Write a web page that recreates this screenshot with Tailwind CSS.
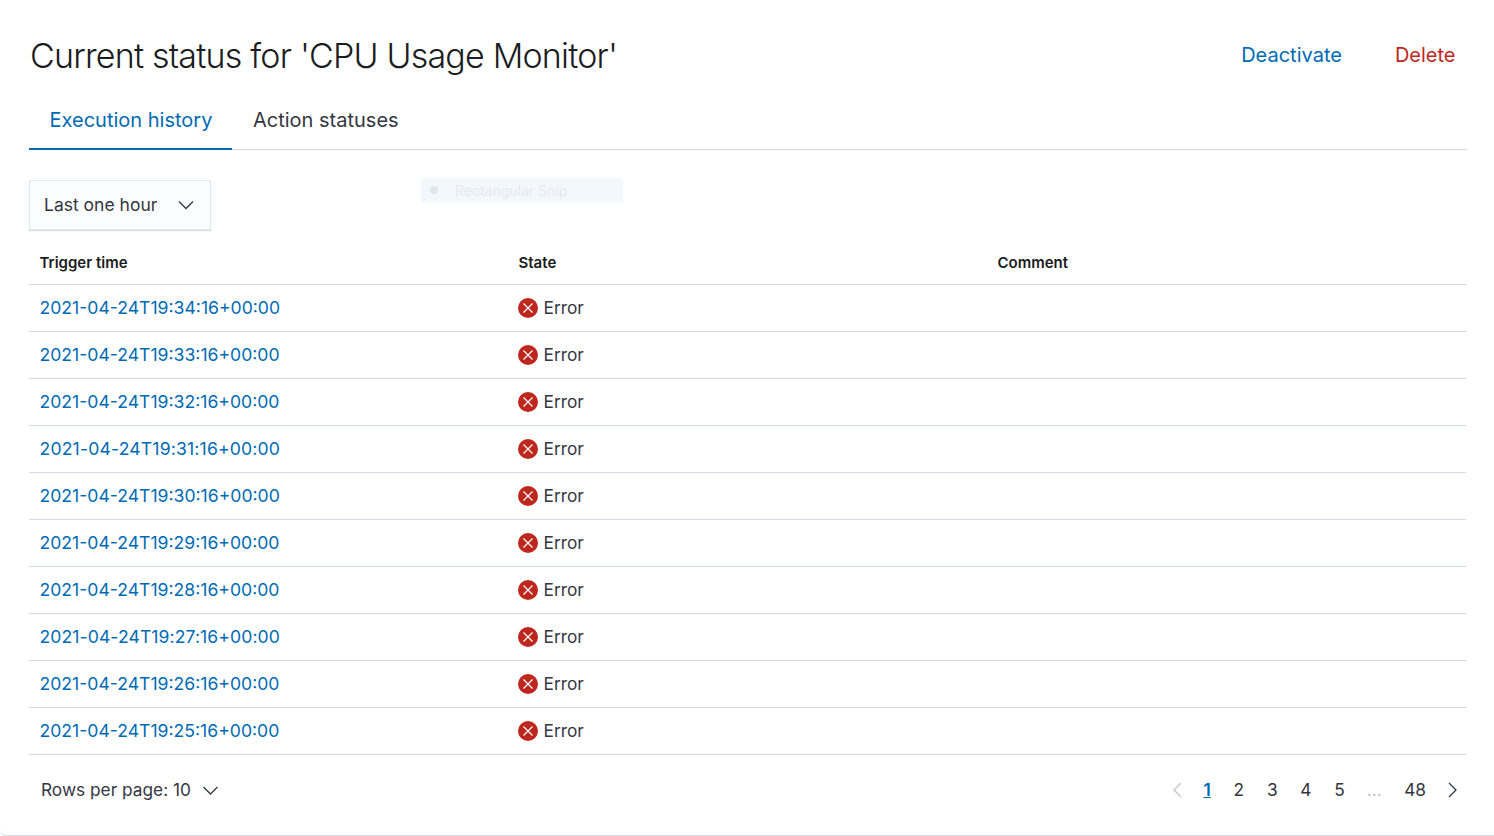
<!DOCTYPE html>
<html lang="en">
<head>
    <meta charset="UTF-8">
    <title>Current status</title>
    <script src="https://cdn.jsdelivr.net/npm/@tailwindcss/browser@4"></script>
</head>
<body class="bg-white font-['Inter',sans-serif] text-[#343741]">
<div class="relative w-[1494px] h-[836px] overflow-hidden border-b border-[#d3dae6] rounded-bl-md">

    <!-- header -->
    <header class="flex items-center justify-between h-[111px] pl-[30px] pr-[38.5px]">
        <h1 class="text-[34px] leading-[40px] font-light tracking-[-0.8px] text-[#1a1c21]">Current status for 'CPU Usage Monitor'</h1>
        <div class="flex items-center gap-[53px] pb-[2px] text-[20px] leading-[24px]">
            <a class="text-[#006bb4]">Deactivate</a>
            <a class="text-[#bd271e]">Delete</a>
        </div>
    </header>

    <!-- tabs -->
    <nav class="flex mx-[29px] w-[1438px] h-[39px] border-b border-[#d3dae6] text-[20px] leading-[18px]">
        <a class="w-[203px] h-[39px] pl-[20.5px] border-b-2 border-[#006bb4] text-[#006bb4]">Execution history</a>
        <a class="pl-[21px]">Action statuses</a>
    </nav>

    <!-- range select -->
    <div class="mt-[30px] ml-[29px] flex items-center justify-between w-[182px] h-[50px] pl-[14px] pr-[16px] bg-[#fbfcfd] border border-[#e4e7f1] shadow-[0_1px_1px_rgba(152,162,179,0.35)] text-[17.5px]">
        <span>Last one hour</span>
        <svg class="w-[16px] h-[10px]" viewBox="0 0 16 10" fill="none" stroke="#343741" stroke-width="1.3"><path d="M1 1.5l7 7 7-7"/></svg>
    </div>

    <!-- stray snip overlay -->
    <div class="absolute left-[421px] top-[178px] w-[202px] h-[24px] flex items-center bg-[#f3f8fc] text-[14px] text-[#e6e9ed]">
        <span class="ml-[9px] w-[8px] h-[8px] rounded-full bg-[#dfe5ec]"></span>
        <span class="ml-[17px]">Rectangular Snip</span>
    </div>

    <!-- table -->
    <div class="mt-[10px] mx-[29px] w-[1437px]">
        <div class="grid grid-cols-[479px_479px_1fr] items-center h-[45px] pl-[10.5px] pt-[2px] border-b border-[#d3dae6] text-[15px] font-semibold text-[#1a1c21]">
            <span>Trigger time</span><span>State</span><span>Comment</span>
        </div>

        <div class="grid grid-cols-[479px_479px_1fr] items-center h-[47px] pl-[11px] border-b border-[#d3dae6] text-[17.3px]">
            <a class="text-[17.6px] text-[#006bb4] -ml-[0.5px]">2021-04-24T19:34:16+00:00</a>
            <span class="flex items-center gap-[5.5px] -ml-[1px]"><svg class="w-[20px] h-[20px]" viewBox="0 0 20 20"><circle cx="10" cy="10" r="10" fill="#bd271e"/><path d="M5.5 5.5l9 9m0-9l-9 9" stroke="#fff" stroke-width="1.2"/></svg>Error</span>
            <span></span>
        </div>
        <div class="grid grid-cols-[479px_479px_1fr] items-center h-[47px] pl-[11px] border-b border-[#d3dae6] text-[17.3px]">
            <a class="text-[17.6px] text-[#006bb4] -ml-[0.5px]">2021-04-24T19:33:16+00:00</a>
            <span class="flex items-center gap-[5.5px] -ml-[1px]"><svg class="w-[20px] h-[20px]" viewBox="0 0 20 20"><circle cx="10" cy="10" r="10" fill="#bd271e"/><path d="M5.5 5.5l9 9m0-9l-9 9" stroke="#fff" stroke-width="1.2"/></svg>Error</span>
            <span></span>
        </div>
        <div class="grid grid-cols-[479px_479px_1fr] items-center h-[47px] pl-[11px] border-b border-[#d3dae6] text-[17.3px]">
            <a class="text-[17.6px] text-[#006bb4] -ml-[0.5px]">2021-04-24T19:32:16+00:00</a>
            <span class="flex items-center gap-[5.5px] -ml-[1px]"><svg class="w-[20px] h-[20px]" viewBox="0 0 20 20"><circle cx="10" cy="10" r="10" fill="#bd271e"/><path d="M5.5 5.5l9 9m0-9l-9 9" stroke="#fff" stroke-width="1.2"/></svg>Error</span>
            <span></span>
        </div>
        <div class="grid grid-cols-[479px_479px_1fr] items-center h-[47px] pl-[11px] border-b border-[#d3dae6] text-[17.3px]">
            <a class="text-[17.6px] tracking-[0.17px] text-[#006bb4] -ml-[0.5px]">2021-04-24T19:31:16+00:00</a>
            <span class="flex items-center gap-[5.5px] -ml-[1px]"><svg class="w-[20px] h-[20px]" viewBox="0 0 20 20"><circle cx="10" cy="10" r="10" fill="#bd271e"/><path d="M5.5 5.5l9 9m0-9l-9 9" stroke="#fff" stroke-width="1.2"/></svg>Error</span>
            <span></span>
        </div>
        <div class="grid grid-cols-[479px_479px_1fr] items-center h-[47px] pl-[11px] border-b border-[#d3dae6] text-[17.3px]">
            <a class="text-[17.6px] text-[#006bb4] -ml-[0.5px]">2021-04-24T19:30:16+00:00</a>
            <span class="flex items-center gap-[5.5px] -ml-[1px]"><svg class="w-[20px] h-[20px]" viewBox="0 0 20 20"><circle cx="10" cy="10" r="10" fill="#bd271e"/><path d="M5.5 5.5l9 9m0-9l-9 9" stroke="#fff" stroke-width="1.2"/></svg>Error</span>
            <span></span>
        </div>
        <div class="grid grid-cols-[479px_479px_1fr] items-center h-[47px] pl-[11px] border-b border-[#d3dae6] text-[17.3px]">
            <a class="text-[17.6px] text-[#006bb4] -ml-[0.5px]">2021-04-24T19:29:16+00:00</a>
            <span class="flex items-center gap-[5.5px] -ml-[1px]"><svg class="w-[20px] h-[20px]" viewBox="0 0 20 20"><circle cx="10" cy="10" r="10" fill="#bd271e"/><path d="M5.5 5.5l9 9m0-9l-9 9" stroke="#fff" stroke-width="1.2"/></svg>Error</span>
            <span></span>
        </div>
        <div class="grid grid-cols-[479px_479px_1fr] items-center h-[47px] pl-[11px] border-b border-[#d3dae6] text-[17.3px]">
            <a class="text-[17.6px] text-[#006bb4] -ml-[0.5px]">2021-04-24T19:28:16+00:00</a>
            <span class="flex items-center gap-[5.5px] -ml-[1px]"><svg class="w-[20px] h-[20px]" viewBox="0 0 20 20"><circle cx="10" cy="10" r="10" fill="#bd271e"/><path d="M5.5 5.5l9 9m0-9l-9 9" stroke="#fff" stroke-width="1.2"/></svg>Error</span>
            <span></span>
        </div>
        <div class="grid grid-cols-[479px_479px_1fr] items-center h-[47px] pl-[11px] border-b border-[#d3dae6] text-[17.3px]">
            <a class="text-[17.6px] tracking-[0.08px] text-[#006bb4] -ml-[0.5px]">2021-04-24T19:27:16+00:00</a>
            <span class="flex items-center gap-[5.5px] -ml-[1px]"><svg class="w-[20px] h-[20px]" viewBox="0 0 20 20"><circle cx="10" cy="10" r="10" fill="#bd271e"/><path d="M5.5 5.5l9 9m0-9l-9 9" stroke="#fff" stroke-width="1.2"/></svg>Error</span>
            <span></span>
        </div>
        <div class="grid grid-cols-[479px_479px_1fr] items-center h-[47px] pl-[11px] border-b border-[#d3dae6] text-[17.3px]">
            <a class="text-[17.6px] text-[#006bb4] -ml-[0.5px]">2021-04-24T19:26:16+00:00</a>
            <span class="flex items-center gap-[5.5px] -ml-[1px]"><svg class="w-[20px] h-[20px]" viewBox="0 0 20 20"><circle cx="10" cy="10" r="10" fill="#bd271e"/><path d="M5.5 5.5l9 9m0-9l-9 9" stroke="#fff" stroke-width="1.2"/></svg>Error</span>
            <span></span>
        </div>
        <div class="grid grid-cols-[479px_479px_1fr] items-center h-[47px] pl-[11px] border-b border-[#d3dae6] text-[17.3px]">
            <a class="text-[17.6px] text-[#006bb4] -ml-[0.5px]">2021-04-24T19:25:16+00:00</a>
            <span class="flex items-center gap-[5.5px] -ml-[1px]"><svg class="w-[20px] h-[20px]" viewBox="0 0 20 20"><circle cx="10" cy="10" r="10" fill="#bd271e"/><path d="M5.5 5.5l9 9m0-9l-9 9" stroke="#fff" stroke-width="1.2"/></svg>Error</span>
            <span></span>
        </div>
    </div>

    <!-- pagination -->
    <footer class="flex items-center justify-between h-[70px] pl-[41px] pr-[36px] text-[17.3px]">
        <div class="flex items-center gap-[12px]">
            <span>Rows per page: 10</span>
            <svg class="w-[15px] h-[9px]" viewBox="0 0 15 9" fill="none" stroke="#343741" stroke-width="1.3"><path d="M.5 1l7 7 7-7"/></svg>
        </div>
        <div class="flex items-center">
            <svg class="w-[10px] h-[16px] mr-[10px]" viewBox="0 0 10 16" fill="none" stroke="#c2c3c6" stroke-width="1.3"><path d="M9 1L2 8l7 7"/></svg>
            <span class="w-[30px] text-center font-semibold text-[#006bb4] underline">1</span>
            <span class="w-[33.5px] text-center">2</span>
            <span class="w-[33.5px] text-center">3</span>
            <span class="w-[33.5px] text-center">4</span>
            <span class="w-[33.5px] text-center">5</span>
            <span class="w-[34px] ml-[1px] text-center text-[#c2c3c6]">...</span>
            <span class="ml-[13px] mr-[22px]">48</span>
            <svg class="w-[10px] h-[16px]" viewBox="0 0 10 16" fill="none" stroke="#343741" stroke-width="1.3"><path d="M1 1l7 7-7 7"/></svg>
        </div>
    </footer>
</div>
</body>
</html>
